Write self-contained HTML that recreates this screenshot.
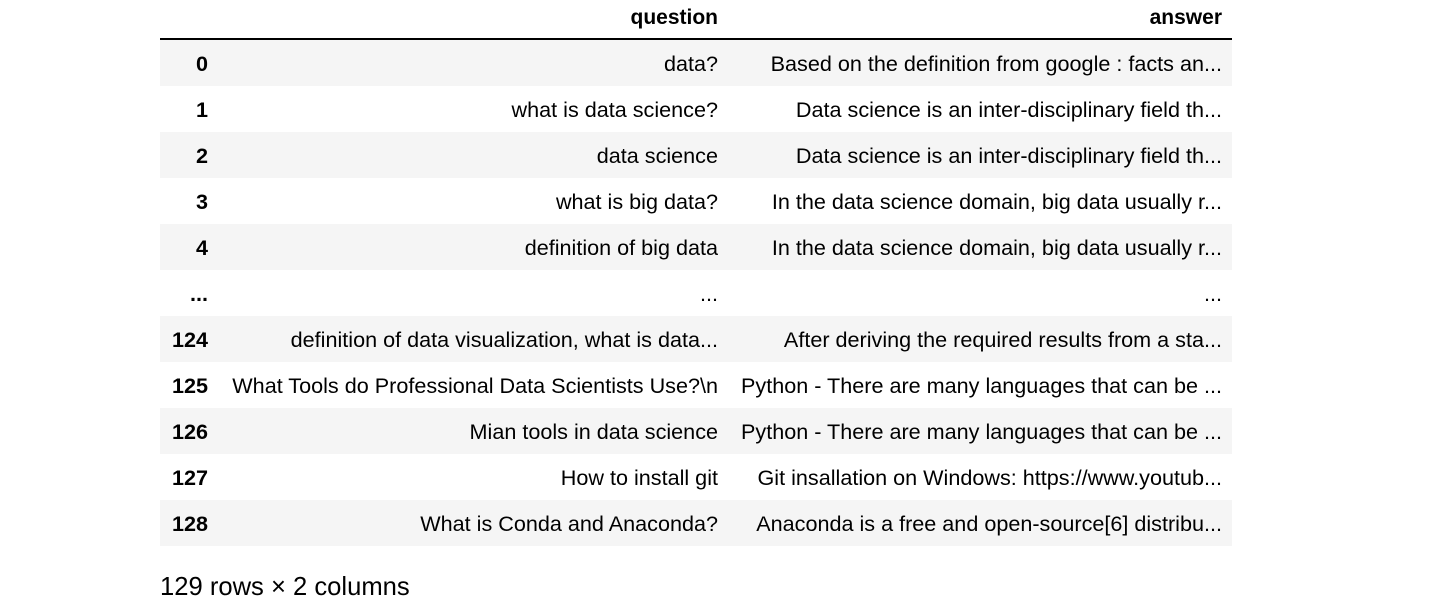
<!DOCTYPE html>
<html><head><style>
body{margin:0;width:1432px;height:612px;background:#fff;font-family:"Liberation Sans",sans-serif;font-size:21.6px;color:#000;position:relative;overflow:hidden}
.r{position:absolute;left:160px;width:1072px;height:46px}
.s{background:#f5f5f5}
.c{position:absolute;top:1px;line-height:46px;text-align:right;white-space:nowrap}
.i{left:0;width:48px;font-weight:bold}
.q{left:40px;width:518px}
.a{left:570px;width:492px}
.hd{position:absolute;left:160px;top:0;width:1072px;height:38px;border-bottom:2px solid #000}
.hd .c{line-height:34px;font-weight:bold;font-size:21px}
.f{position:absolute;left:160px;top:572px;line-height:30px;font-size:25.6px}
</style></head><body>
<div class="hd"><div class="c q">question</div><div class="c a">answer</div></div>
<div class="r s" style="top:40px"><div class="c i">0</div><div class="c q">data?</div><div class="c a">Based on the definition from google : facts an...</div></div>
<div class="r" style="top:86px"><div class="c i">1</div><div class="c q">what is data science?</div><div class="c a">Data science is an inter-disciplinary field th...</div></div>
<div class="r s" style="top:132px"><div class="c i">2</div><div class="c q">data science</div><div class="c a">Data science is an inter-disciplinary field th...</div></div>
<div class="r" style="top:178px"><div class="c i">3</div><div class="c q">what is big data?</div><div class="c a">In the data science domain, big data usually r...</div></div>
<div class="r s" style="top:224px"><div class="c i">4</div><div class="c q">definition of big data</div><div class="c a">In the data science domain, big data usually r...</div></div>
<div class="r" style="top:270px"><div class="c i">...</div><div class="c q">...</div><div class="c a">...</div></div>
<div class="r s" style="top:316px"><div class="c i">124</div><div class="c q">definition of data visualization, what is data...</div><div class="c a">After deriving the required results from a sta...</div></div>
<div class="r" style="top:362px"><div class="c i">125</div><div class="c q">What Tools do Professional Data Scientists Use?\n</div><div class="c a">Python - There are many languages that can be ...</div></div>
<div class="r s" style="top:408px"><div class="c i">126</div><div class="c q">Mian tools in data science</div><div class="c a">Python - There are many languages that can be ...</div></div>
<div class="r" style="top:454px"><div class="c i">127</div><div class="c q">How to install git</div><div class="c a">Git insallation on Windows: https://www.youtub...</div></div>
<div class="r s" style="top:500px"><div class="c i">128</div><div class="c q">What is Conda and Anaconda?</div><div class="c a">Anaconda is a free and open-source[6] distribu...</div></div>
<div class="f">129 rows × 2 columns</div>
</body></html>
